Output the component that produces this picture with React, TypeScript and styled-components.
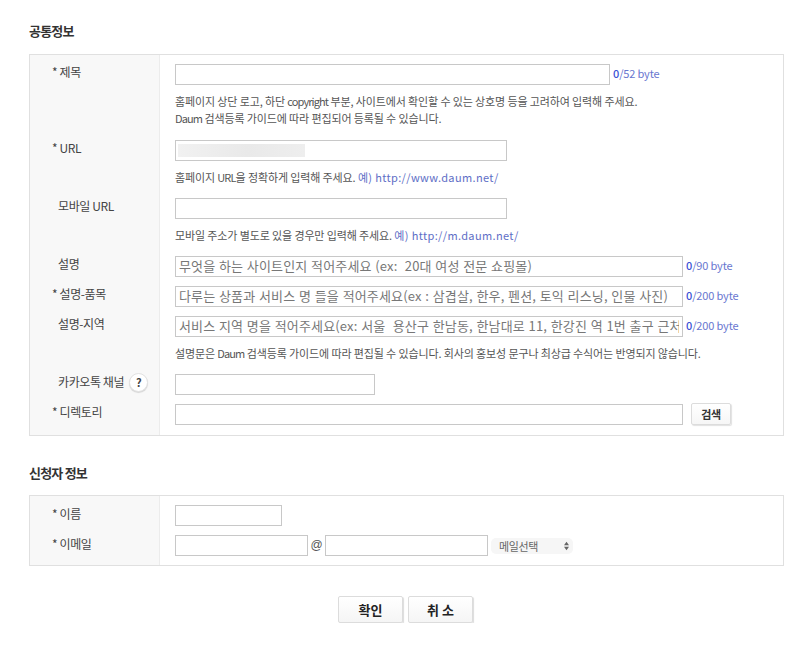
import React from "react";
import styled, { createGlobalStyle } from "styled-components";

const Global = createGlobalStyle`
  html, body { margin: 0; padding: 0; background: #fff; }
  body { font-family: "Noto Sans CJK KR", "Liberation Sans", sans-serif; color: #444; }
`;
const Page = styled.main`
  width: 755px;
  padding: 23px 0 0 29px;
`;
const Heading = styled.h2<{ $top?: number }>`
  margin: ${(p) => p.$top ?? 0}px 0 ${(p) => (p.$top ? 14 : 15)}px;
  font-size: 13px;
  line-height: 16px;
  font-weight: 700;
  color: #333;
  letter-spacing: -0.8px;
`;
const Panel = styled.section`
  border: 1px solid #e0e0e0;
  background: linear-gradient(to right, #f8f8f8 129px, #ececec 129px, #ececec 130px, #fff 130px);
`;
const Row = styled.div<{ $gap?: number; $first?: boolean }>`
  display: grid;
  grid-template-columns: 130px 1fr;
  padding-top: ${(p) => (p.$first ? 9 : 0)}px;
  padding-bottom: ${(p) => p.$gap ?? 9}px;
`;
const Label = styled.div<{ $required?: boolean; $lower?: boolean }>`
  display: flex;
  align-items: flex-start;
  gap: 5px;
  margin-top: ${(p) => (p.$lower ? 0 : -1)}px;
  padding-left: ${(p) => (p.$required ? 22 : 28)}px;
  font-size: 12px;
  line-height: 17px;
  color: #444;
  letter-spacing: -0.4px;
  white-space: nowrap;
`;
const HelpBadge = styled.span`
  display: flex;
  align-items: center;
  justify-content: center;
  width: 17px;
  height: 17px;
  border: 1px solid #e2e2e2;
  border-radius: 50%;
  background: #fff;
  box-shadow: 0 1px 1px rgba(0, 0, 0, 0.14);
  font-size: 11px;
  font-weight: 700;
  color: #444;
`;
const Field = styled.div`
  padding-left: 15px;
  min-width: 0;
`;
const Line = styled.div`
  display: flex;
  align-items: center;
`;
const InputWrap = styled.div`
  position: relative;
`;
const Input = styled.input<{ $w: number }>`
  box-sizing: border-box;
  display: block;
  width: ${(p) => p.$w}px;
  height: 21px;
  padding: 0 3px 2px;
  border: 1px solid #c8c8c8;
  border-radius: 0;
  background: #fff;
  outline: none;
  font-family: "Noto Sans CJK KR", sans-serif;
  font-size: 13px;
  letter-spacing: 0.15px;
  word-spacing: 0.6px;
  &::placeholder { color: #777; opacity: 1; }
`;
const Blur = styled.span`
  position: absolute;
  left: 3px;
  top: 4px;
  width: 127px;
  height: 13px;
  background: linear-gradient(to right, #f1f1f1, #e9e9e9 55%, #eeeeee);
  filter: blur(0.5px);
`;
const Counter = styled.span`
  margin: -2px 0 0 3px;
  font-size: 11px;
  line-height: 17px;
  color: #6876cf;
  white-space: nowrap;
  letter-spacing: -0.15px;
  b { color: #3d52d5; font-weight: 500; }
`;
const Help = styled.p`
  margin: 8px 0 0;
  font-size: 11px;
  line-height: 17px;
  color: #555;
  white-space: nowrap;
  letter-spacing: -0.12px;
`;
const Latin = styled.span`
  letter-spacing: -0.9px;
`;
const Example = styled.span`
  color: #5e6ec6;
  letter-spacing: 0.35px;
`;
const SearchButton = styled.button`
  box-sizing: border-box;
  width: 40px;
  height: 22px;
  margin: -1px 0 0 8px;
  padding: 0;
  border: 1px solid #dcdcdc;
  border-radius: 2px;
  background: linear-gradient(#fff, #f6f6f6);
  box-shadow: 1px 1px 1px rgba(0, 0, 0, 0.12);
  font-family: "Noto Sans CJK KR", sans-serif;
  font-size: 11px;
  font-weight: 700;
  letter-spacing: -0.4px;
  color: #333;
`;
const At = styled.span`
  width: 17px;
  margin-top: -1px;
  text-align: center;
  font-size: 12px;
  color: #555;
  font-family: "Liberation Sans", sans-serif;
`;
const SelectBox = styled.div`
  position: relative;
  margin-left: 3px;
  width: 82px;
  height: 16px;
`;
const Select = styled.select`
  appearance: none;
  box-sizing: border-box;
  display: block;
  width: 100%;
  height: 100%;
  padding: 0 0 0 8px;
  border: 0;
  border-radius: 5px;
  background: #f6f6f6;
  outline: none;
  font-family: "Noto Sans CJK KR", sans-serif;
  font-size: 11px;
  letter-spacing: -0.4px;
  color: #666;
`;
const Arrows = styled.svg`
  position: absolute;
  right: 4px;
  top: 3px;
  width: 5px;
  height: 10px;
`;
const Actions = styled.div`
  display: flex;
  justify-content: center;
  gap: 5px;
  margin-top: 30px;
  padding-right: 2px;
`;
const ActionButton = styled.button`
  box-sizing: border-box;
  width: 65px;
  height: 27px;
  padding: 0;
  border: 1px solid #dcdcdc;
  border-radius: 2px;
  background: linear-gradient(#fff, #f5f5f5);
  box-shadow: 1px 1px 1px rgba(0, 0, 0, 0.14);
  font-family: "Noto Sans CJK KR", sans-serif;
  font-size: 13px;
  font-weight: 700;
  color: #222;
`;

const Req = () => <span>*</span>;

export default function App() {
  return (
    <Page>
      <Global />
      <Heading>공통정보</Heading>
      <Panel>
        <Row $first $gap={13}>
          <Label $required><span><Req /> 제목</span></Label>
          <Field>
            <Line><Input $w={435} /><Counter><b>0</b>/52 byte</Counter></Line>
            <Help>
              홈페이지 상단 로고, 하단 <Latin>copyright</Latin> 부분, 사이트에서 확인할 수 있는 상호명 등을 고려하여 입력해 주세요.<br />
              <Latin>Daum</Latin> 검색등록 가이드에 따라 편집되어 등록될 수 있습니다.
            </Help>
          </Field>
        </Row>
        <Row $gap={12}>
          <Label $required><span><Req /> URL</span></Label>
          <Field>
            <InputWrap><Input $w={332} /><Blur /></InputWrap>
            <Help>홈페이지 <Latin>URL</Latin>을 정확하게 입력해 주세요. <Example>예) http://www.daum.net/</Example></Help>
          </Field>
        </Row>
        <Row $gap={12}>
          <Label>모바일 URL</Label>
          <Field>
            <Input $w={332} />
            <Help>모바일 주소가 별도로 있을 경우만 입력해 주세요. <Example>예) http://m.daum.net/</Example></Help>
          </Field>
        </Row>
        <Row>
          <Label>설명</Label>
          <Field>
            <Line>
              <Input $w={508} placeholder="무엇을 하는 사이트인지 적어주세요 (ex:  20대 여성 전문 쇼핑몰)" />
              <Counter><b>0</b>/90 byte</Counter>
            </Line>
          </Field>
        </Row>
        <Row>
          <Label $required><span><Req /> 설명-품목</span></Label>
          <Field>
            <Line>
              <Input $w={508} placeholder="다루는 상품과 서비스 명 들을 적어주세요(ex : 삼겹살, 한우, 펜션, 토익 리스닝, 인물 사진)" />
              <Counter><b>0</b>/200 byte</Counter>
            </Line>
          </Field>
        </Row>
        <Row $gap={12}>
          <Label>설명-지역</Label>
          <Field>
            <Line>
              <Input $w={508} placeholder="서비스 지역 명을 적어주세요(ex: 서울  용산구 한남동, 한남대로 11, 한강진 역 1번 출구 근처)" />
              <Counter><b>0</b>/200 byte</Counter>
            </Line>
            <Help>설명문은 <Latin>Daum</Latin> 검색등록 가이드에 따라 편집될 수 있습니다. 회사의 홍보성 문구나 최상급 수식어는 반영되지 않습니다.</Help>
          </Field>
        </Row>
        <Row>
          <Label>카카오톡 채널<HelpBadge>?</HelpBadge></Label>
          <Field><Input $w={200} /></Field>
        </Row>
        <Row $gap={10}>
          <Label $required><span><Req /> 디렉토리</span></Label>
          <Field>
            <Line><Input $w={508} /><SearchButton type="button">검색</SearchButton></Line>
          </Field>
        </Row>
      </Panel>

      <Heading $top={29}>신청자 정보</Heading>
      <Panel>
        <Row $first>
          <Label $required $lower><span><Req /> 이름</span></Label>
          <Field><Input $w={107} /></Field>
        </Row>
        <Row>
          <Label $required $lower><span><Req /> 이메일</span></Label>
          <Field>
            <Line>
              <Input $w={133} />
              <At>@</At>
              <Input $w={163} />
              <SelectBox>
                <Select defaultValue="">
                  <option value="">메일선택</option>
                </Select>
                <Arrows viewBox="0 0 6 10" aria-hidden="true">
                  <path d="M3 0 L6 4 L0 4 Z M0 6 L6 6 L3 10 Z" fill="#666" />
                </Arrows>
              </SelectBox>
            </Line>
          </Field>
        </Row>
      </Panel>
      <Actions>
        <ActionButton type="button">확인</ActionButton>
        <ActionButton type="button">취 소</ActionButton>
      </Actions>
    </Page>
  );
}
